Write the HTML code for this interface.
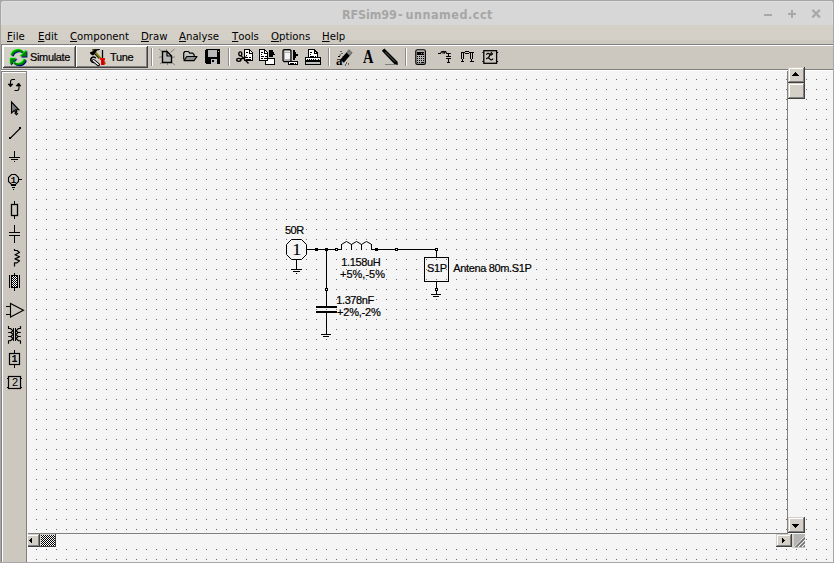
<!DOCTYPE html>
<html><head><meta charset="utf-8"><title>RFSim99 - unnamed.cct</title>
<style>
html,body{margin:0;padding:0;}
body{width:834px;height:563px;position:relative;overflow:hidden;background:#f5f5f5;font-family:"Liberation Sans",sans-serif;}
.abs{position:absolute;}
#canvas{left:27px;top:70px;width:806px;height:492px;background-color:#f5f5f5;
 background-image:radial-gradient(circle at 0.5px 0.5px,#686868 0.6px,rgba(104,104,104,0) 0.95px);background-size:10px 10px;background-position:-1px -1px;}
#title{left:0;top:0;width:834px;height:25px;background:#a6a6a6;}
#title .in{left:1px;top:1px;width:832px;height:24px;background:#d7d7d7;border-radius:3px 3px 0 0;box-shadow:inset 1px 1px 0 #dddddd, inset -1px 0 0 #dddddd;}
#title .t{left:342px;top:7px;white-space:nowrap;font:bold 12.5px "DejaVu Sans Condensed","DejaVu Sans","Liberation Sans",sans-serif;color:#a7a6a5;}
#menu{left:0;top:25px;width:834px;height:19px;background:linear-gradient(#d4d0c8 0,#d4d0c8 15px,#cdc9c1 15px,#cdc9c1 19px);}
#menu span{position:absolute;top:5px;font:11.3px "DejaVu Sans Condensed","DejaVu Sans",sans-serif;font-kerning:none;color:#000;white-space:nowrap;}
#menu u{text-decoration:underline;text-underline-offset:1px;}
#tb{left:0;top:44px;width:834px;height:25px;background:#ccc8c0;box-shadow:inset 0 1px 0 #808080, inset 0 2px 0 #fff;}
.btn{position:absolute;background:#d4d0c8;box-shadow:inset -1px -1px 0 #404040, inset 1px 1px 0 #fff, inset -2px -2px 0 #808080;}
.lbl{-webkit-text-stroke:0.2px #000;position:absolute;font:11px "Liberation Sans",sans-serif;letter-spacing:-0.35px;color:#000;white-space:nowrap;}
.sep{position:absolute;top:4px;width:1px;height:18px;background:#8c8c8c;box-shadow:1px 0 0 #fff;}
#pal{left:1px;top:71px;width:25px;height:491px;background:#ccc8c0;box-shadow:inset 1px 1px 0 #808080, inset 2px 2px 0 #fff;}
.ct{-webkit-text-stroke:0.2px #000;position:absolute;font:11px "Liberation Sans",sans-serif;letter-spacing:-0.35px;color:#000;white-space:nowrap;line-height:12px;}
.edgeL{left:0;top:25px;width:1px;height:538px;background:#a6a6a6;}
.edgeL2{left:1px;top:44px;width:1px;height:26px;background:#808080;}
.edgeL3{left:2px;top:45px;width:1px;height:24px;background:#fff;}
.edgeR{left:833px;top:25px;width:1px;height:538px;background:#a6a6a6;}
.edgeB{left:0;top:562px;width:834px;height:1px;background:#a6a6a6;}
.sb{position:absolute;background:#d4d0c8;box-shadow:inset -1px -1px 0 #404040, inset 1px 1px 0 #d4d0c8, inset -2px -2px 0 #808080, inset 2px 2px 0 #fff;}
svg{position:absolute;left:0;top:0;overflow:visible;}
</style></head><body>
<div id="canvas" class="abs"></div>
<div class="abs" style="left:1px;top:69px;width:832px;height:1px;background:#808080"></div>
<div class="abs" style="left:1px;top:70px;width:832px;height:1px;background:#fff"></div>
<div class="abs" style="left:26px;top:71px;width:1px;height:491px;background:#808080"></div>
<div id="title" class="abs"><div class="in abs"></div><div class="t abs" style="letter-spacing:-0.15px">RFSim99</div><div class="t abs" style="left:398px">-</div><div class="t abs" style="left:405.500px;letter-spacing:0.5px">unnamed.cct</div><svg width="834" height="25" style="left:0;top:0"><g stroke="#a8a8a8" stroke-width="2" fill="none"><path d="M764 15h8M788 14h8M792 10v8"/><path d="M812.300 9.800l7.600 7.600M819.900 9.800l-7.600 7.600" stroke-width="2.200"/></g></svg></div>
<div id="menu" class="abs">
<span style="left:7px"><u>F</u>ile</span><span style="left:38px"><u>E</u>dit</span><span style="left:70px"><u>C</u>omponent</span><span style="left:141px"><u>D</u>raw</span><span style="left:179px"><u>A</u>nalyse</span><span style="left:232px"><u>T</u>ools</span><span style="left:271px"><u>O</u>ptions</span><span style="left:322px"><u>H</u>elp</span>
</div>
<div id="tb" class="abs">
<div class="btn" style="left:3px;top:2px;width:73px;height:22px"><span class="lbl" style="left:27px;top:5px">Simulate</span></div>
<div class="btn" style="left:76px;top:2px;width:72px;height:22px"><span class="lbl" style="left:34px;top:5px">Tune</span></div>
<div class="sep" style="left:151px"></div>
<div class="sep" style="left:228px"></div>
<div class="sep" style="left:328px"></div>
<div class="sep" style="left:405px"></div>
</div>
<div id="pal" class="abs"></div>
<div class="edgeL abs"></div><div class="edgeL2 abs"></div><div class="edgeL3 abs"></div><div class="edgeR abs"></div><div class="edgeB abs"></div>
<!--SCROLL-->
<div class="abs" style="left:28px;top:534px;width:764px;height:13px;background:#f5f5f5"></div>
<div class="abs" style="left:788px;top:70px;width:17px;height:464px;background:#f5f5f5"></div>
<div class="abs" style="left:787px;top:71px;width:1px;height:463px;background:#808080"></div>
<div class="abs" style="left:28px;top:533px;width:760px;height:1px;background:#808080"></div>
<div class="sb" style="left:788px;top:67px;width:17px;height:16px"></div>
<div class="sb" style="left:788px;top:83px;width:17px;height:16px"></div>
<div class="sb" style="left:788px;top:517px;width:17px;height:16px"></div>
<div class="abs" style="left:28px;top:534px;width:12px;height:13px;overflow:hidden"><div class="sb" style="left:-4px;top:0;width:16px;height:13px"></div></div>
<div class="abs" id="thumb" style="left:40px;top:534px;width:16px;height:13px;background:#404040;"><div class="abs" style="left:0;top:0;width:15px;height:12px;background:#d4d0c8"></div><div class="abs" style="left:1px;top:1px;width:14px;height:11px;background:conic-gradient(#fff 25%,#000 0 50%,#fff 0 75%,#000 0) 0 0/2px 2px"></div></div>
<div class="sb" style="left:776px;top:534px;width:16px;height:13px"></div>
<svg width="834" height="563" shape-rendering="crispEdges">
<path d="M795 72h1v1h1v1h1v1h1v1h-7v-1h1v-1h1v-1h1z" fill="#000"/>
<path d="M792 524h7v1h-1v1h-1v1h-1v1h-1v-1h-1v-1h-1v-1h-1z" fill="#000"/>
<path d="M31 538h1v5h-1v-1h-1v-1h-1v-1h1v-1h1z" fill="#000"/>
<path d="M782 538h1v1h1v1h1v1h-1v1h-1v1h-1z" fill="#000"/>
<rect x="792" y="534" width="2" height="14" fill="#d8d4cc"/>
<rect x="794" y="534" width="11" height="13" fill="#b4b4b4"/>
<rect x="794" y="547" width="11" height="1" fill="#c4c4c4"/>
<clipPath id="gc"><rect x="794" y="534" width="11" height="13"/></clipPath>
<g clip-path="url(#gc)" shape-rendering="auto"><path d="M793.5 547.5L806 535V548z" fill="#f5f5f5"/>
<path d="M794 549L807 536M798 549L807 540M802 549L807 544" stroke="#6e6e6e" stroke-width="1.7" fill="none"/></g>
</svg>
<!--ICONS-->
<svg width="834" height="563"><defs><pattern id="chk" width="2" height="2" patternUnits="userSpaceOnUse"><rect width="2" height="2" fill="#fff"/><rect width="1" height="1" fill="#000"/><rect x="1" y="1" width="1" height="1" fill="#000"/></pattern></defs><g transform="translate(0.800 0.800)" stroke="#000080" fill="#000080"><path d="M11.81 55.45A7.0 7.0 0 0 1 22.81 51.98" fill="none" stroke-width="1.900"/><path d="M26.6 50.2V56.6H20.2z" stroke="none"/><g transform="rotate(180 18.5 57.5)"><path d="M11.81 55.45A7.0 7.0 0 0 1 22.81 51.98" fill="none" stroke-width="1.900"/><path d="M26.6 50.2V56.6H20.2z" stroke="none"/></g></g><g transform="translate(-0.700 -0.700)" stroke="#00ff00" fill="#00ff00"><path d="M11.81 55.45A7.0 7.0 0 0 1 22.81 51.98" fill="none" stroke-width="1.900"/><path d="M26.6 50.2V56.6H20.2z" stroke="none"/><g transform="rotate(180 18.5 57.5)"><path d="M11.81 55.45A7.0 7.0 0 0 1 22.81 51.98" fill="none" stroke-width="1.900"/><path d="M26.6 50.2V56.6H20.2z" stroke="none"/></g></g><g transform="translate(0 0)" stroke="#008000" fill="#008000"><path d="M11.81 55.45A7.0 7.0 0 0 1 22.81 51.98" fill="none" stroke-width="1.900"/><path d="M26.6 50.2V56.6H20.2z" stroke="none"/><g transform="rotate(180 18.5 57.5)"><path d="M11.81 55.45A7.0 7.0 0 0 1 22.81 51.98" fill="none" stroke-width="1.900"/><path d="M26.6 50.2V56.6H20.2z" stroke="none"/></g></g>
<g>
<path d="M91.9 49.3L99.8 49V50L96.9 50.6L95.4 53.4L93 55.4L91 54.6L89.9 53L90.3 51.9L92.6 51.5L93 50.3z" fill="#000"/>
<path d="M92 49.6L93.6 50.4" stroke="#808000" stroke-width="1.2"/>
<path d="M94.8 53.6L99.2 58.4" stroke="#000" stroke-width="1.4"/>
<path d="M95.6 52.6L105.4 63.8" stroke="#808000" stroke-width="2"/>
<path d="M102.5 50V58" stroke="#000" stroke-width="1.3"/>
<rect x="100" y="58" width="5" height="2" fill="#f00"/><rect x="101" y="60" width="3.6" height="5" fill="#f00"/><rect x="102.3" y="59" width="0.9" height="6" fill="#800000"/>
<path d="M95.400 57.800A2.700 2.700 0 1 0 94.600 62.300" fill="none" stroke="#000" stroke-width="1.500" stroke-linecap="round"/>
<path d="M93.600 60.600L98.400 64.800" fill="none" stroke="#000" stroke-width="3.200" stroke-linecap="round"/>
<path d="M93.400 60.400L98.200 64.600" fill="none" stroke="#fff" stroke-width="1.300" stroke-linecap="round"/>
</g>
<g shape-rendering="crispEdges">
<!-- new -->
<g stroke="#808080" stroke-width="1" shape-rendering="auto"><path d="M159 49l3 2.5M174.5 49l-4 3.5M159 57.3l3-0.6M175 57l-3 0.3M160 63.8l2.5-1.6M174.8 64.8l-3-2.4M166.5 49v2M167.5 65v-2"/></g>
<path d="M162.5 51.5h4.5l4.5 4.5v6.5h-9z" fill="#b8b8b8" stroke="#000" stroke-width="1.4" shape-rendering="auto"/>
<path d="M167 51.5v4.5h4.5" fill="none" stroke="#000" stroke-width="1.2" shape-rendering="auto"/>
<!-- open -->
<g shape-rendering="auto"><path d="M183.7 59.5v-6.6l1.2-1.4h3.6l1.2 1.6h3l1.4 1.6v2" fill="#c4c4c4" stroke="#000" stroke-width="1.2" stroke-linejoin="round"/>
<path d="M184 60.6l2.8-4.1h10.2l-3 4.1z" fill="#909090" stroke="#000" stroke-width="1.2" stroke-linejoin="round"/></g>
<!-- save -->
<path d="M206 49h13l1 1v13l-1 1h-13l-1-1v-13z" fill="#000"/>
<rect x="208" y="50" width="9" height="7" fill="#b8b8b8"/><rect x="211" y="59" width="6" height="5" fill="#c0c0c0"/><rect x="212" y="60" width="2" height="2" fill="#000"/><rect x="218" y="51" width="1" height="1" fill="#b0b0b0"/>
<!-- cut -->
<path d="M244.5 49.5h5l2.5 2.5v8h-7.500z" fill="#fff" stroke="#000" stroke-width="1"/>
<path d="M249 50v3h3" fill="none" stroke="#000"/>
<path d="M246 52.500h2M246 55.500h1M246 57.500h2M249 57.500h2M246 59.500h5" stroke="#000" fill="none"/>
<g shape-rendering="auto" fill="none" stroke="#000" stroke-width="1.350"><ellipse cx="240.300" cy="53.800" rx="1.500" ry="2"/><ellipse cx="238.800" cy="59.800" rx="2.100" ry="1.500"/><path d="M241 55.600L248.500 63.500M240.800 59.200L246.500 57"/></g>
<!-- copy -->
<path d="M265.500 58.500h9v6h-9z" fill="#fff" stroke="#000"/>
<path d="M259.500 49.500h5l3 3v7.500h-8z" fill="#fff" stroke="#000"/>
<path d="M264 50v3h3" fill="none" stroke="#000"/>
<path d="M261 52.500h2M261 54.500h1M261 56.500h3M265 56.500h2M261 58.500h2M264 58.500h3" stroke="#000" fill="none"/>
<path d="M269 50h4v2h1v2h1v1h-2v2h-4z" fill="#000"/>
<!-- paste -->
<path d="M284 49.600h6l1 1v10l-1 1h-6l-1-1v-10z" fill="#b0b0b0" stroke="#000" stroke-width="1.200" shape-rendering="auto"/>
<rect x="285" y="53" width="5" height="6" fill="#f4f4f4"/><path d="M285 51.500h5" stroke="#e8e8e8"/>
<path d="M293 50h2v2h1v2h2v2h-2v2h-1v2h-2z" fill="#000"/>
<path d="M288.500 61.500h9v3h-9z" fill="#fff" stroke="#000"/><path d="M290 63.500h4M295 63.500h1" stroke="#000"/>
<!-- print -->
<path d="M308.500 57v-7.500h5.500l3.500 3.500v4" fill="#fff" stroke="#000"/>
<path d="M314 50v3h3" fill="none" stroke="#000"/><path d="M310 52.500h2M310 54.500h1M310 56.500h4M315 56.500h1" stroke="#000"/>
<path d="M305.500 57.500h15v6.500h-15z" fill="#fff" stroke="#000" stroke-width="1.200"/>
<path d="M306 61h14" stroke="#000" stroke-width="1.2"/><rect x="306" y="62" width="14" height="2" fill="#c0c0c0"/><path d="M306 64.200h14" stroke="#000" stroke-width="1.1"/>
<path d="M307 59.500h1M309 59.500h1M311 59.500h1M313 59.500h1M315 59.500h1M318 59.500h1" stroke="#000"/>
</g>
<g shape-rendering="auto">
<!-- eraser -->
<path d="M340.400 59.400L349 49.500L352.400 52.700L343.800 62.700z" fill="#000"/>
<path d="M346.400 52.500L349 49.500L352.400 52.700L349.700 55.800z" fill="#808080"/>
<path d="M340.500 51.500h1M341.500 53.500h1M339.500 55h1.200M338 56.500h2M342.500 57h1M346 63h1M348 64h1M345 65h1" stroke="#000" stroke-width="1.2"/>
<!-- pen -->
<path d="M381.800 50.800L384.400 48.600L397.600 61.800L397.800 65L394.600 64.200z" fill="#000"/>
<path d="M385.200 51.800L395.200 61.800" stroke="#707070" stroke-width="0.9"/>
<path d="M385 64.500H395" stroke="#808080" stroke-width="1"/>
<!-- calc -->
<rect x="415.800" y="49.700" width="9.600" height="14.600" rx="1.600" fill="#b4b4b4" stroke="#000" stroke-width="1.150"/>
<rect x="417" y="52" width="7" height="3" fill="#000" shape-rendering="crispEdges"/><rect x="421" y="53" width="1" height="1" fill="#808080"/><rect x="423" y="53" width="1" height="1" fill="#808080"/>
<g fill="#000" shape-rendering="crispEdges"><rect x="417" y="56" width="1" height="1"/><rect x="419" y="56" width="1" height="1"/><rect x="421" y="56" width="1" height="1"/><rect x="423" y="56" width="1" height="1"/><rect x="417" y="58" width="1" height="1"/><rect x="419" y="58" width="1" height="1"/><rect x="421" y="58" width="1" height="1"/><rect x="423" y="58" width="1" height="1"/><rect x="417" y="60" width="1" height="1"/><rect x="419" y="60" width="1" height="1"/><rect x="421" y="60" width="1" height="1"/><rect x="423" y="60" width="1" height="1"/><rect x="417" y="62" width="1" height="1"/><rect x="419" y="62" width="1" height="1"/><rect x="421" y="62" width="3" height="1"/></g>
<!-- LC -->
<g fill="none" stroke="#000" stroke-width="1.100"><path d="M438 53.500h2.500l1-1.700l0.800-0.400l0.700 0.400v1.500v-1.500l0.700-0.400l0.700 0.400v1.500v-1.500l0.700-0.400l0.700 0.400l0.800 1.700h4.200" stroke-linejoin="round"/><path d="M448.500 53.500v3M448.500 58.500v3.800"/><path d="M446 56.500h5M446 58.500h5M447 62.500h3" shape-rendering="crispEdges" stroke-width="1"/></g>
<!-- bridge -->
<g fill="none" stroke="#000" stroke-width="1" shape-rendering="crispEdges"><path d="M461 52.500h4M469 52.500h4.500M465 51.500h4M465 53.500h4M461.500 53v6M463.500 53v6M462.500 59v3M461 61.500h3M470.500 53v6M472.500 53v6M471.500 59v3M470 61.500h3.500"/></g>
<!-- filter -->
<rect x="483.800" y="50.700" width="12.800" height="12.600" fill="none" stroke="#000" stroke-width="1.300"/>
<g fill="none" stroke="#000" stroke-width="1.250"><path d="M486.300 54.700q1.600-2.400 3.400-0.500t3.200-0.900M486.300 59.200q1.600-2.400 3.400-0.300t3.400-0.300M491.800 52.200l-3.200 5.200"/><path d="M482.300 61.500h1.200M497 61.500h1.200M482.300 52.500h1.200M497 52.500h1.200" stroke-width="1"/></g>
</g>
<!--TBICONS-->
</svg>
<span class="abs" style="left:363px;top:47px;font:bold 18px 'Liberation Serif',serif;line-height:20px;color:#000;transform:scaleX(0.8);transform-origin:0 0">A</span>
<span class="abs" style="left:336px;top:54px;font:bold 13px 'Liberation Serif',serif;line-height:14px;color:#000">a</span>
<!--PALICONS-->
<svg width="834" height="563" fill="none" stroke="#000" stroke-width="1" shape-rendering="crispEdges">
<!-- rotate -->
<g shape-rendering="auto" stroke-width="1.100"><path d="M15 79.500h-2.500q-2 0.200-2 2.500v4.500"/><path d="M8 84h5l-2.500 3z" fill="#000" stroke-width="0.600"/><path d="M14.500 90.500h2.500q2-0.200 2-2.500v-4.500"/><path d="M16 86h5l-2.500-3z" fill="#000" stroke-width="0.600"/></g>
<!-- pointer -->
<path d="M11.500 102v11l2.700-2.500l1.500 1.800l-0.800 0.900l1.600 1.600l1-1l-1.500-1.800l0.800-0.800l-1.200-1.400h3.200z" fill="#808080" shape-rendering="auto" stroke-width="1.1"/>
<!-- wire -->
<path d="M10 138.500L20.500 128" shape-rendering="auto" stroke-width="1.1"/><rect x="9" y="137" width="2" height="2" fill="#000" stroke="none"/><rect x="19" y="127" width="2" height="2" fill="#000" stroke="none"/>
<!-- ground -->
<path d="M14.500 151v6.500M9 157.500h11M11 159.500h7M14 161.500h1"/>
<!-- port -->
<path d="M11.500 174.500h4l3 3v4l-3 3h-4l-3-3v-4z" shape-rendering="auto" stroke-width="1.100"/>
<path d="M19 179.500h3M13.500 185v1M11 185.500h5M12 187.500h3M13 189.500h1"/>
<!-- resistor -->
<path d="M14.500 201v3M14.500 216v3"/><rect x="11.500" y="204.500" width="6" height="11" stroke-width="1.300" shape-rendering="auto"/>
<!-- capacitor -->
<path d="M14.500 225v7M9 232.500h11M9 235.500h11M14.500 236v7"/>
<!-- inductor -->
<path d="M14.500 249v1.500h2.500l2.500 2l-4.500 2.200l4.500 2l-4.500 2.200l4.500 2l-2.500 2h-2.500v3.500" shape-rendering="auto" stroke-width="1.200" stroke-linejoin="round"/>
<!-- tline -->
<path d="M14.500 273v2M14.500 288v3M9.500 275v13M19.500 275v13"/>
<rect x="11.500" y="275.500" width="6" height="12" fill="#fff"/><rect x="12" y="276" width="5" height="11" stroke="none" fill="#000" style="fill:url(#chk)"/>
<!-- amp -->
<path d="M10.500 303.500v13.500l13-6.800z" shape-rendering="auto" stroke-width="1.100"/><path d="M6 306.500h4M6 314.500h4"/>
<!-- transformer -->
<path d="M13.500 328v13M15.500 328v13"/>
<g shape-rendering="auto" stroke-width="1.150" stroke-linejoin="round"><path d="M8.500 326v2.500h2l2.500 2.300l-2 1.700l2 2l-2 2l2 2l-2.500 2.200h-2v3M8.200 332.500h3M8.200 336.500h3"/><path d="M20.500 326v2.500h-2l-2.500 2.300l2 1.700l-2 2l2 2l-2 2l2.500 2.200h2v3M20.800 332.500h-3M20.800 336.500h-3"/></g>
<!-- 1 port -->
<path d="M14.500 350v3M14.500 365v3"/><rect x="9.500" y="353.500" width="10" height="11" stroke-width="1.200" shape-rendering="auto"/>
<!-- 2 port -->
<rect x="8.500" y="376.500" width="12" height="12" stroke-width="1.200" shape-rendering="auto"/><path d="M7 378.500h1M7 387.500h1M21 378.500h1M21 387.500h1"/>
</svg>
<span class="abs" style="left:10.700px;top:176px;font:bold 9px 'Liberation Mono',monospace;line-height:10px;color:#000">1</span>
<span class="abs" style="left:11.500px;top:355px;font:bold 10px 'Liberation Mono',monospace;line-height:10px;color:#000">1</span>
<span class="abs" style="left:11.500px;top:378px;font:10px 'Liberation Sans',sans-serif;line-height:10px;color:#000;transform:scaleX(1.1);transform-origin:0 0">2</span>
<!--CIRCUIT-->
<svg width="834" height="563" shape-rendering="crispEdges" fill="none" stroke="#000" stroke-width="1">
<!-- source -->
<path d="M291.5 239.5h10l5 5v10l-5 5h-10l-5-5v-10z" shape-rendering="auto"/>
<path d="M296.5 260v9.5M291 269.5h11M293 271.5h7M296 273.5h1"/>
<!-- wires -->
<path d="M307 249.5h34M372 249.5h65M436.5 250v7M326.5 250v56M326.5 313v21M321 334.5h10M323 336.5h6"/>
<!-- inductor -->
<path d="M341.5 250v-6M351.5 250v-6M361.5 250v-6M371.5 250v-6"/><path d="M341.5 244.5l1.5-1l3.5-2l3.5 2l1.5 1l1.5-1l3.5-2l3.5 2l1.5 1l1.5-1l3.5-2l3.5 2l1.5 1" shape-rendering="auto" stroke-linejoin="round"/>
<!-- capacitor -->
<path d="M316 307h21M316 312h21" stroke-width="2"/>
<!-- S1P box -->
<rect x="424.5" y="257.5" width="24" height="24"/>
<path d="M436.5 282v12M431 294.5h10M433 296.5h6"/>
<!-- nodes -->
<g fill="#000" stroke="none"><rect x="315" y="248" width="3" height="3"/><rect x="325" y="248" width="3" height="3"/><rect x="375" y="248" width="3" height="3"/></g>
<g fill="#f5f5f5"><rect x="335.5" y="248.5" width="2" height="2"/><rect x="395.5" y="248.5" width="2" height="2"/><rect x="435.5" y="248.5" width="2" height="2"/><rect x="325.5" y="288.5" width="2" height="2"/><rect x="435.5" y="288.5" width="2" height="2"/></g>
</svg>
<span class="ct" style="left:285px;top:224px;letter-spacing:-0.5px">50R</span>
<span class="ct" style="left:291.700px;top:242.500px;font:16.500px 'Liberation Serif',serif;line-height:14px;letter-spacing:0;-webkit-text-stroke:0;transform:scaleX(1.150);transform-origin:0 0">1</span>
<span class="ct" style="left:341.300px;top:256px">1.158uH</span>
<span class="ct" style="left:340px;top:268px;letter-spacing:0">+5%,-5%</span>
<span class="ct" style="left:336.300px;top:294px;letter-spacing:-0.42px">1.378nF</span>
<span class="ct" style="left:337px;top:306px;letter-spacing:-0.2px">+2%,-2%</span>
<span class="ct" style="left:427px;top:262px">S1P</span>
<span class="ct" style="left:453.300px;top:262px">Antena 80m.S1P</span>
</body></html>
